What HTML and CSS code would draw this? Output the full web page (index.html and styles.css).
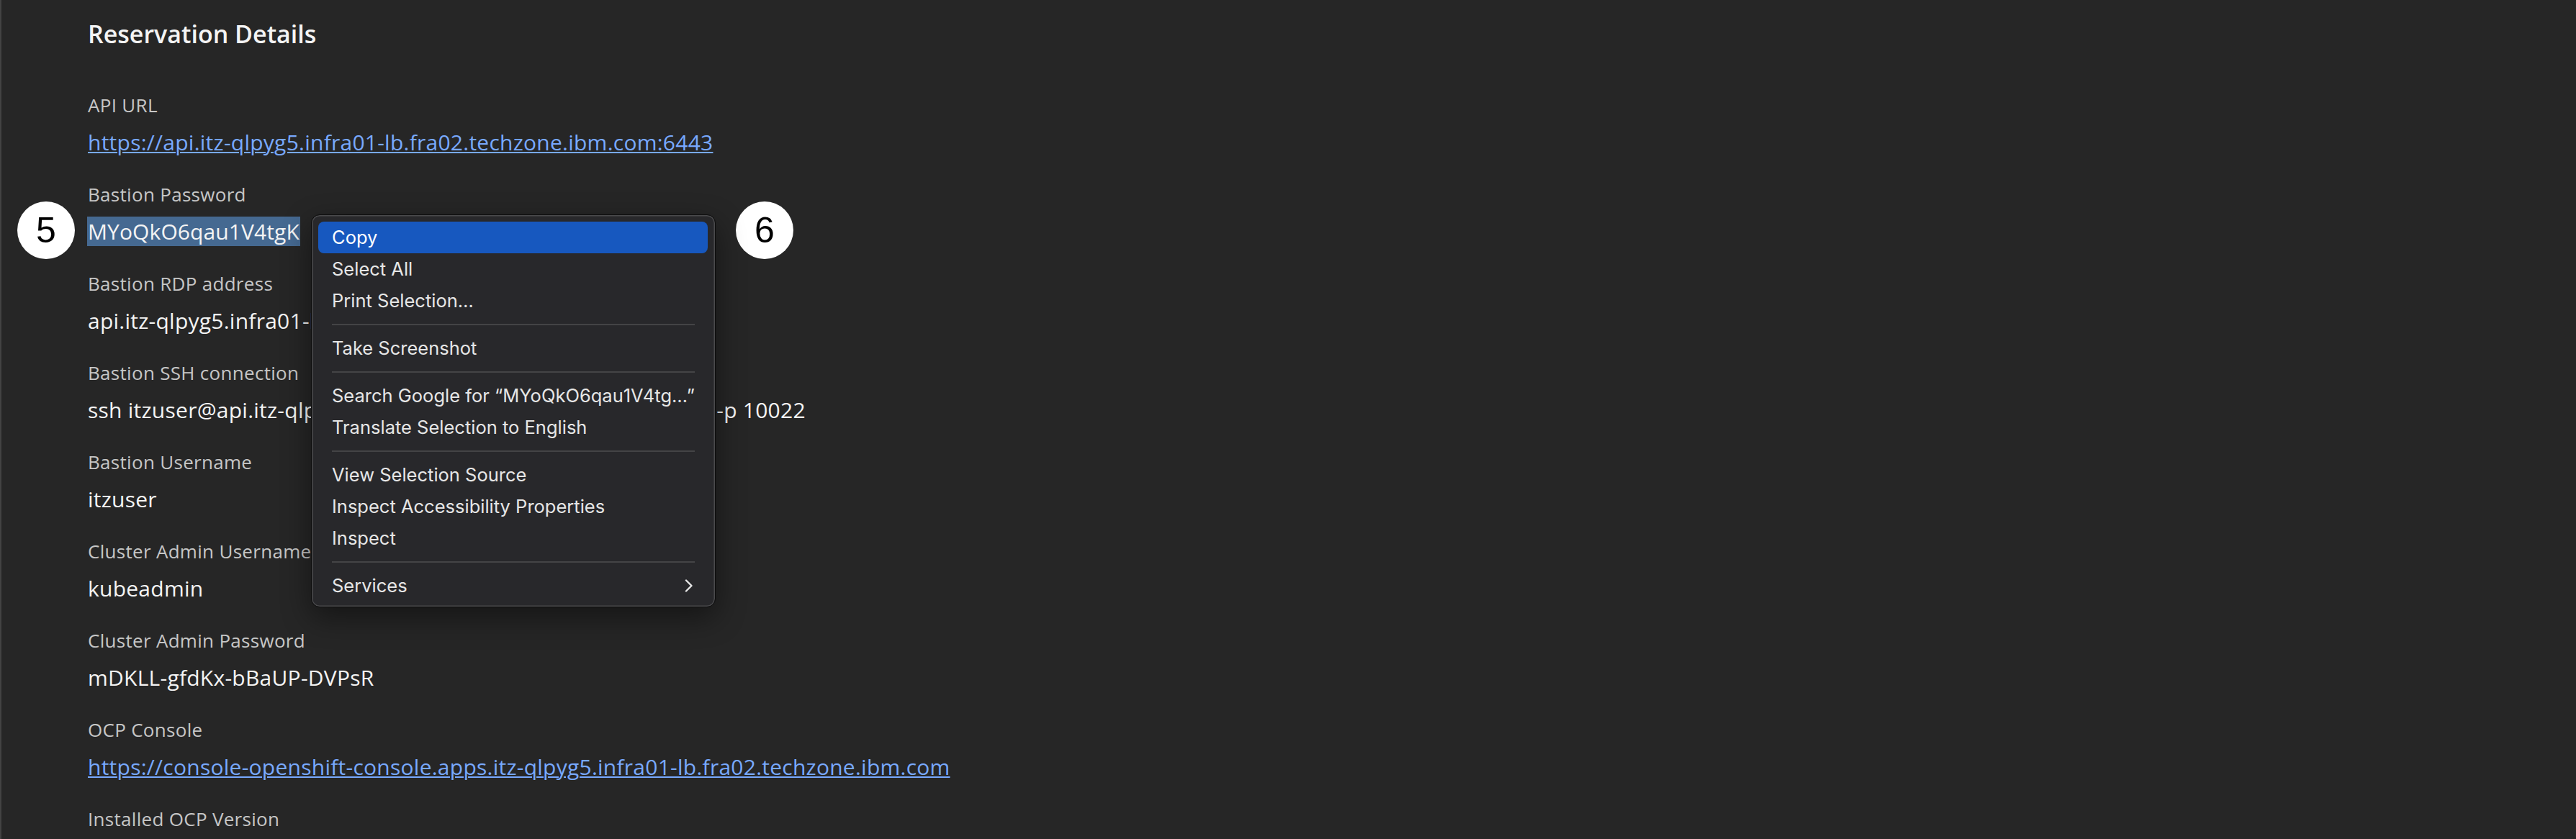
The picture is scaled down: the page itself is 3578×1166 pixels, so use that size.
FILE: index.html
```html
<!DOCTYPE html>
<html lang="en">
<head>
<meta charset="utf-8">
<title>Reservation Details</title>
<link rel="stylesheet" href="styles.css">
</head>
<body>
<main class="page">
  <h2 class="title">Reservation Details</h2>
  <dl class="details">
    <div class="field">
      <dt class="label">API URL</dt>
      <dd class="value"><a class="link" href="#">https://api.itz-qlpyg5.infra01-lb.fra02.techzone.ibm.com:6443</a></dd>
    </div>
    <div class="field">
      <dt class="label">Bastion Password</dt>
      <dd class="value"><span class="selected">MYoQkO6qau1V4tgK</span></dd>
    </div>
    <div class="field">
      <dt class="label">Bastion RDP address</dt>
      <dd class="value">api.itz-qlpyg5.infra01-lb.fra02.techzone.ibm.com:3389</dd>
    </div>
    <div class="field">
      <dt class="label">Bastion SSH connection</dt>
      <dd class="value">ssh itzuser@api.itz-qlpyg5.infra01-lb.fra02.techzone.ibm.com -p 10022</dd>
    </div>
    <div class="field">
      <dt class="label">Bastion Username</dt>
      <dd class="value">itzuser</dd>
    </div>
    <div class="field">
      <dt class="label">Cluster Admin Username</dt>
      <dd class="value">kubeadmin</dd>
    </div>
    <div class="field">
      <dt class="label">Cluster Admin Password</dt>
      <dd class="value">mDKLL-gfdKx-bBaUP-DVPsR</dd>
    </div>
    <div class="field">
      <dt class="label">OCP Console</dt>
      <dd class="value"><a class="link" href="#">https://console-openshift-console.apps.itz-qlpyg5.infra01-lb.fra02.techzone.ibm.com</a></dd>
    </div>
    <div class="field">
      <dt class="label">Installed OCP Version</dt>
    </div>
  </dl>
</main>

<div class="badge badge-left">5</div>
<div class="badge badge-right">6</div>

<div class="menu">
  <div class="item active">Copy</div>
  <div class="item">Select All</div>
  <div class="item">Print Selection…</div>
  <div class="sep"></div>
  <div class="item">Take Screenshot</div>
  <div class="sep"></div>
  <div class="item">Search Google for “MYoQkO6qau1V4tg…”</div>
  <div class="item">Translate Selection to English</div>
  <div class="sep"></div>
  <div class="item">View Selection Source</div>
  <div class="item">Inspect Accessibility Properties</div>
  <div class="item">Inspect</div>
  <div class="sep"></div>
  <div class="item has-sub">
    <span>Services</span>
    <svg class="chev" width="12" height="18" viewBox="0 0 12 18"><path d="M2 1.5 L9.5 9 L2 16.5" fill="none" stroke="currentColor" stroke-width="2.4" stroke-linecap="round" stroke-linejoin="round"/></svg>
  </div>
</div>
</body>
</html>
```

FILE: styles.css
```css
html, body {
  margin: 0;
  padding: 0;
  background: #262626;
  height: 100%;
  overflow: hidden;
}

body {
  font-family: "Open Sans", "Liberation Sans", Arial, sans-serif;
  color: #f4f4f4;
}

.page {
  border-left: 2px solid #434343;
  min-height: 100%;
  box-sizing: border-box;
  padding: 25px 0 0 120px;
}

.title {
  margin: 0;
  font-size: 34px;
  line-height: 44px;
  font-weight: 600;
  color: #f4f4f4;
}

.details {
  margin: 61px 0 0 0;
  padding: 0;
}

.field {
  margin-bottom: 36px;
}

.label {
  font-size: 26px;
  line-height: 33px;
  letter-spacing: 0.3px;
  color: #c6c6c6;
  margin: 0 0 14px 0;
}

.value {
  margin: 0;
  font-size: 30px;
  line-height: 41px;
  letter-spacing: 0.25px;
  color: #f4f4f4;
  white-space: nowrap;
}

.link {
  color: #78a9ff;
  text-decoration: underline;
  text-decoration-thickness: 2px;
  text-underline-offset: 2px;
}

.selected {
  display: inline-block;
  background: #456991;
  padding: 0 1px;
  margin-left: -1px;
  letter-spacing: 0.1px;
}

.badge {
  position: absolute;
  top: 280px;
  width: 80px;
  height: 80px;
  border-radius: 50%;
  background: #ffffff;
  color: #000000;
  font-family: "Liberation Sans", Arial, sans-serif;
  font-size: 50px;
  line-height: 80px;
  text-align: center;
}

.badge-left {
  left: 24px;
}

.badge-right {
  left: 1022px;
}

.menu {
  position: absolute;
  left: 432px;
  top: 298px;
  width: 562px;
  height: 546px;
  box-sizing: border-box;
  padding: 9px 10px 8px 9px;
  background: #28282b;
  border: 1px solid #0c0c0c;
  border-radius: 12px;
  box-shadow: inset 0 0 0 1.5px #4a4a4c, 0 14px 40px rgba(0, 0, 0, 0.45);
  font-family: Inter, "Liberation Sans", sans-serif;
  font-size: 25.5px;
  color: #e6e6e6;
}

.item {
  height: 44px;
  line-height: 44px;
  padding: 0 20px 0 19px;
  border-radius: 8px;
  display: flex;
  align-items: center;
  justify-content: space-between;
  white-space: nowrap;
}

.item.active {
  background: #1758bf;
  color: #ffffff;
}

.sep {
  height: 2px;
  margin: 10px 18px 10px 19px;
  background: #444446;
}

.chev {
  color: #e6e6e6;
}
```
